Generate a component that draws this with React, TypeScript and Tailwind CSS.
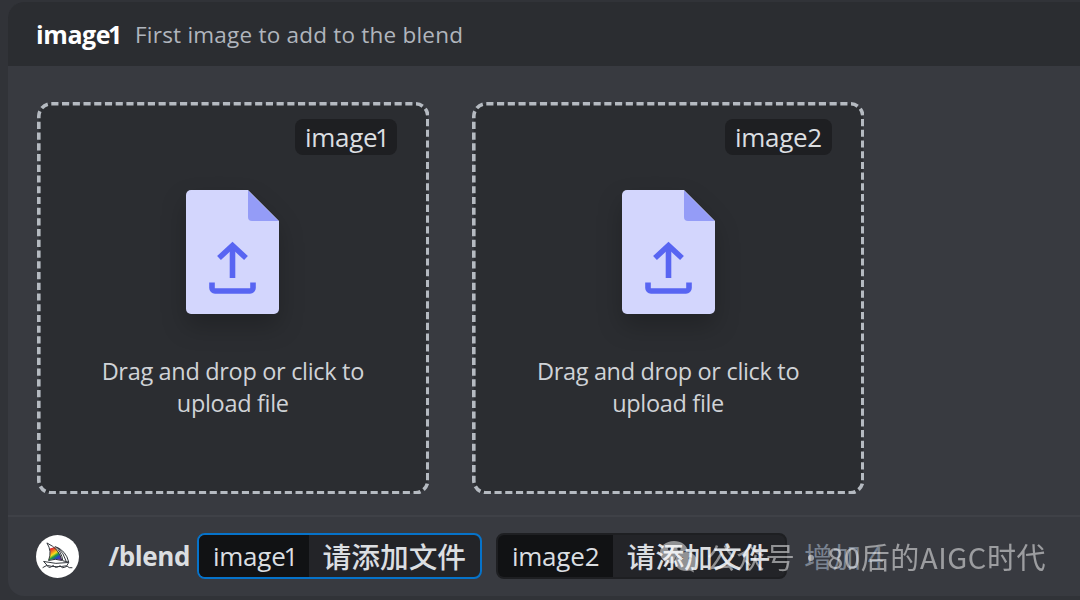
import clsx from 'clsx'

const slots = [
  { id: 1, label: 'image1' },
  { id: 2, label: 'image2' },
]

// A trailing "1" carries wide side bearings, so it is pulled in on both sides.
function OptionName({ text }: { text: string }) {
  if (!text.endsWith('1')) return <span>{text}</span>
  return (
    <span>
      {text.slice(0, -1)}
      <span className="-mr-[3px] -ml-[2.300px]">1</span>
    </span>
  )
}

function FileIcon() {
  return (
    <svg width="93" height="124" viewBox="0 0 93 124" className="drop-shadow-[0_12px_12px_rgba(0,0,0,0.22)]">
      <path d="M5 0H62L93 31V119a5 5 0 0 1-5 5H5a5 5 0 0 1-5-5V5a5 5 0 0 1 5-5Z" fill="#d3d6fd" />
      <path d="M62 .5 92.6 31H66a4 4 0 0 1-4-4Z" fill="#949cf7" />
      <g fill="none" stroke="#5865f2" strokeWidth="5.6">
        <path d="M46.500 88V55" />
        <path d="M33 68 46.500 55.500 60 68" />
        <path d="M26 92.500V98a3 3 0 0 0 3 3H64a3 3 0 0 0 3-3V92.500" />
      </g>
    </svg>
  )
}

function DashedFrame() {
  return (
    <svg className="pointer-events-none absolute inset-0 h-full w-full" viewBox="0 0 392.600 392.600">
      <rect
        x="1.8"
        y="1.8"
        width="389"
        height="389"
        rx="12.500"
        fill="#2b2d31"
        stroke="#b5bac1"
        strokeWidth="3.6"
        pathLength={429}
        strokeDasharray="2 1"
      />
    </svg>
  )
}

function DropZone({ label }: { label: string }) {
  return (
    <div className="relative flex h-[392.600px] w-[392.600px] shrink-0 flex-col items-center">
      <DashedFrame />
      <div className="relative flex w-full justify-end pt-[17.600px] pr-8">
        <span className="flex h-9 items-center rounded-lg bg-[#1e1f22] px-[10.500px] text-[26px] tracking-[-0.3px] text-[#dbdee1]">
          <OptionName text={label} />
        </span>
      </div>
      <div className="relative mt-[34.600px]">
        <FileIcon />
      </div>
      <p className="relative mt-[41px] w-[290px] text-center text-[23.500px] leading-8 tracking-[-0.320px] text-[#d0d3d7]">
        Drag and drop or click to upload file
      </p>
    </div>
  )
}

function BoatAvatar() {
  return (
    <svg width="43" height="43" viewBox="109 90 130 130" className="shrink-0">
      <defs>
        <linearGradient id="pride" x1="150" y1="134" x2="174" y2="170" gradientUnits="userSpaceOnUse">
          <stop offset=".05" stopColor="#e5322d" />
          <stop offset=".25" stopColor="#f58a1f" />
          <stop offset=".42" stopColor="#f7e21d" />
          <stop offset=".58" stopColor="#1d9a3f" />
          <stop offset=".76" stopColor="#2347c5" />
          <stop offset="1" stopColor="#7a2499" />
        </linearGradient>
      </defs>
      <circle cx="174" cy="155" r="65" fill="#fff" />
      <path d="M151 131Q154 151 147 166Q167 160 186 166Q182 145 166 126Z" fill="url(#pride)" />
      <g fill="none" stroke="#30343a" strokeWidth="3" strokeLinejoin="round">
        <path d="M142 114Q158 139 147 167Q168 160 187 167Q180 132 142 114Z" />
        <path d="M167 125Q187 142 190 168L208 172Q200 137 167 125Z" />
        <path d="M174 127Q194 146 200 169" />
        <path d="M132 170Q168 180 208 173L202 183Q168 189 143 182Z" />
        <path d="M129 189q8-5 13-7q5 9 12 5l7-5q6 9 13 5l8-4q6 9 13 5l8-4q5 7 16 5" />
      </g>
    </svg>
  )
}

function OptionPill({ label, active, className }: { label: string; active?: boolean; className?: string }) {
  return (
    <div
      className={clsx(
        'flex h-[46px] shrink-0 overflow-hidden rounded-lg border-2 bg-[#232428] text-[#dbdee1]',
        active ? 'border-[#0673ca]' : 'border-[#1e1f22]',
        className,
      )}
    >
      <span className="flex items-center bg-[#111214] px-[14px] text-[26px] tracking-[-0.2px]">
        <OptionName text={label} />
      </span>
      <span className="flex flex-1 items-center pl-[13.500px] font-['Noto_Sans_CJK_SC',sans-serif] text-[28.700px] leading-none font-medium whitespace-nowrap">
        请添加文件
      </span>
    </div>
  )
}

function WeChatIcon() {
  return (
    <svg width="38" height="32" viewBox="0 0 38 32" fill="#fff">
      <path
        fillRule="evenodd"
        d="M14 0C6 0 0 5 0 11.500c0 4 2 7 5 9L4 25l5-3 5 .6C14 16 19 10 28 10 27 4 21 0 14 0ZM9.500 6a1.700 1.700 0 1 1 0 3.400 1.700 1.700 0 0 1 0-3.400Zm9.500 0a1.700 1.700 0 1 1 0 3.400 1.700 1.700 0 0 1 0-3.400Z"
      />
      <path
        fillRule="evenodd"
        d="M26 11c-6.500 0-11 4-11 9.500S19.500 30 26 30l4-.6 4 2.200-1-3.500c2.500-1.800 4-4.500 4-7.600C37 15 32.500 11 26 11Zm-4 5a1.400 1.400 0 1 1 0 2.800 1.400 1.400 0 0 1 0-2.800Zm8 0a1.400 1.400 0 1 1 0 2.800 1.400 1.400 0 0 1 0-2.800Z"
      />
    </svg>
  )
}

function Watermark() {
  return (
    <div className="pointer-events-none absolute top-[21px] left-[652px] flex items-start font-['Noto_Sans_CJK_SC',sans-serif] text-[29px] leading-9 tracking-[0.6px] whitespace-nowrap text-white opacity-50">
      <span className="mt-[3px]">
        <WeChatIcon />
      </span>
      <span className="ml-[8.500px]">公众号</span>
      <span className="w-[32px] text-center">·</span>
      <span>80后的AIGC时代</span>
    </div>
  )
}

export default function App() {
  return (
    <div className="flex h-[600px] w-[1080px] overflow-hidden bg-[#313338] pt-0.5 pb-1 pl-2 font-['Open_Sans',sans-serif]">
      <div className="flex flex-1 flex-col overflow-hidden rounded-l-2xl bg-[#383a40]">
        <header className="flex h-16 shrink-0 items-center bg-[#2b2d31] pt-px pl-7">
          <span className="w-[99px] text-[25px] font-bold tracking-[-0.4px] text-white">
            <OptionName text="image1" />
          </span>
          <span className="text-[22.500px] tracking-[0.220px] text-[#b0b5bd]">First image to add to the blend</span>
        </header>

        <main className="flex flex-1 gap-[42.700px] pt-[35.600px] pl-[28.500px]">
          {slots.map((slot) => (
            <DropZone key={slot.id} label={slot.label} />
          ))}
        </main>

        <footer className="relative flex h-[81px] shrink-0 items-center border-t-2 border-[#3f4147] pb-px pl-[28.400px]">
          <BoatAvatar />
          <span className="ml-[29px] w-[81px] text-[26px] font-bold tracking-[-0.4px] whitespace-nowrap text-[#dbdee1]">
            /blend
          </span>
          <OptionPill label="image1" active className="ml-[7.500px] w-[285px]" />
          <OptionPill label="image2" className="ml-[14px] w-[291px]" />
          <span className="ml-[17px] font-['Noto_Sans_CJK_SC',sans-serif] text-[28.700px] leading-none whitespace-nowrap text-[#7a8390]">
            增加 4
          </span>
          <Watermark />
        </footer>
      </div>
    </div>
  )
}
